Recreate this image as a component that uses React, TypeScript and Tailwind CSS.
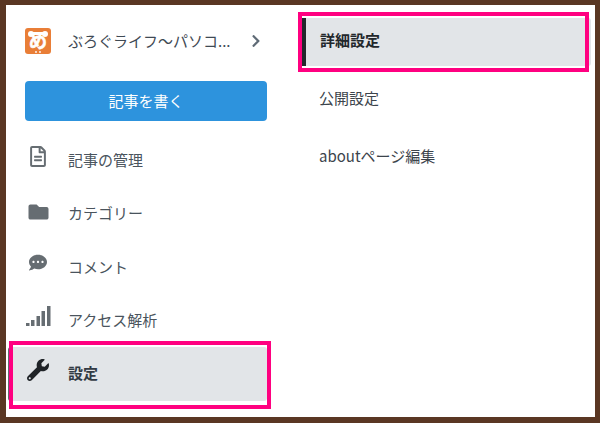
import React from 'react';
import { FaChevronRight, FaCommentDots, FaFolder, FaRegFileAlt, FaWrench } from 'react-icons/fa';

const font = { fontFamily: '"Noto Sans CJK JP", "Noto Sans", sans-serif' };

const Logo = () => (
  <svg width="26" height="26" viewBox="0 0 26 26" className="shrink-0">
    <rect width="26" height="26" rx="3" fill="#e97e37" />
    <circle cx="6" cy="6" r="3" fill="#fff" />
    <circle cx="20" cy="6" r="3" fill="#fff" />
    <rect x="5" y="4" width="16" height="3" fill="#fff" />
    <text x="13" y="20" textAnchor="middle" fontSize="18" fontWeight="700" fill="#fff" fontFamily="Noto Sans CJK JP" stroke="#fff" strokeWidth="0.5">め</text>
    <circle cx="11" cy="24" r="0.9" fill="#fff" />
    <circle cx="15" cy="24" r="0.9" fill="#fff" />
  </svg>
);

const Signal = () => (
  <svg width="25" height="20" viewBox="0 0 25 20" fill="currentColor">
    <rect x="0" y="17" width="3.5" height="3" />
    <rect x="5" y="14" width="3.5" height="6" />
    <rect x="10.5" y="10" width="3.5" height="10" />
    <rect x="15.5" y="5" width="3.5" height="15" />
    <rect x="21" y="0" width="3.5" height="20" />
  </svg>
);

const menu = [
  { label: '記事の管理', icon: <FaRegFileAlt className="ml-[4px] w-[18px] h-[21px] -translate-y-1" /> },
  { label: 'カテゴリー', icon: <FaFolder className="ml-[3px] w-[21px] h-[20px] -translate-y-0.5" /> },
  { label: 'コメント', icon: <FaCommentDots className="ml-[4px] w-[18px] h-[19px] -translate-y-1" /> },
  { label: 'アクセス解析', icon: <span className="-translate-y-1 block ml-[1px]"><Signal /></span> },
];

export default function App() {
  return (
    <div style={font} className="relative box-border w-[600px] h-[423px] overflow-hidden bg-white border-solid border-[#5a3723] border-t-[5px] border-l-[6px] border-r-[5px] border-b-[6px] text-[15px] text-[#3f4a54]">
      <div className="flex h-full">
        <div className="w-[292px] shrink-0 flex flex-col">
          <div className="flex items-center h-[26px] mt-[23px] ml-[19px]">
            <Logo />
            <span className="ml-[17px] whitespace-nowrap">ぶろぐライフ〜パソコ...</span>
            <FaChevronRight className="ml-[19px] w-[12px] h-[14px] text-[#5f6b76]" />
          </div>
          <button className="mt-[27px] ml-[19px] w-[242px] h-[40px] rounded-[4px] bg-[#2d93dd] text-white text-[15px]">記事を書く</button>
          <div className="flex flex-col mt-[12.6px]">
            {menu.map(item => (
              <div key={item.label} className="flex items-center h-[53.33px] ml-[19px] text-[#4a545d]">
                <span className="w-[43px] flex justify-start text-[#666d72]">{item.icon}</span>
                <span>{item.label}</span>
              </div>
            ))}
          </div>
          <div className="flex items-center w-[259px] h-[54px] ml-[2px] bg-[#e2e5e8] rounded-[3px] border-l border-[#5e6b6b] font-bold text-[#333b44]">
            <FaWrench className="ml-[18px] w-[22px] h-[22px] text-[#1f2327] -translate-y-1" />
            <span className="ml-[19px] -translate-y-px">設定</span>
          </div>
        </div>
        <div className="flex-1 flex flex-col mt-[13px] ml-[4px] mr-[4px]">
          <div className="flex items-center h-[48px] pb-[4px] bg-[#e2e5e8] rounded-r-[3px] border-l-[4px] border-[#23282c] pl-[14px] font-bold text-[#22272b]">詳細設定</div>
          <div className="flex items-center h-[58px] mt-[3px] pl-[17px] text-[#3c444c]">公開設定</div>
          <div className="flex items-center h-[58px] pl-[17px] text-[#3c444c]">aboutページ編集</div>
        </div>
      </div>
      <div className="absolute left-[3px] top-[336px] w-[262px] h-[68px] border-[4px] border-[#ff0080]" />
      <div className="absolute left-[292px] top-[7px] w-[291px] h-[60px] border-[4px] border-[#ff0080]" />
    </div>
  );
}
